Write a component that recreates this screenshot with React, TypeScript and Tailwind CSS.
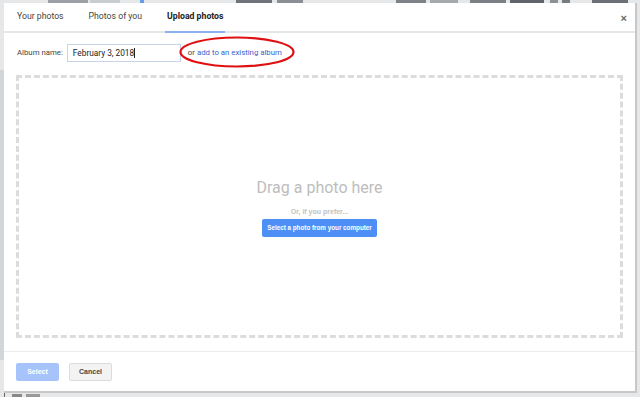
import React from "react";

const thumbs = [
  { x: 48, w: 40, c: "#9aa0a6" }, { x: 90, w: 30, c: "#c9ccd0" }, { x: 140, w: 4, c: "#6a9be8" },
  { x: 236, w: 36, c: "#6e747a" }, { x: 277, w: 26, c: "#8a8f96" }, { x: 396, w: 30, c: "#7d8288" },
  { x: 430, w: 28, c: "#a5a9ad" }, { x: 470, w: 36, c: "#7a8086" }, { x: 510, w: 34, c: "#5f656b" },
  { x: 550, w: 8, c: "#8c9197" }, { x: 562, w: 8, c: "#767b80" }, { x: 592, w: 36, c: "#6a7075" },
];

export default function App() {
  return (
    <div className="relative w-[640px] h-[397px] overflow-hidden bg-[#e6e7e8]" style={{ fontFamily: "Roboto, 'Liberation Sans', sans-serif" }}>
      {/* background photo strip */}
      {thumbs.map((t, i) => (
        <div key={i} className="absolute top-0 h-[3px]" style={{ left: t.x, width: t.w, background: t.c }} />
      ))}
      <div className="absolute left-0 top-[70px] w-[4px] h-[290px] bg-[#d3d6d9]" />
      <div className="absolute left-[4px] top-[393px] w-[1px] h-[4px] bg-[#666]" />
      <div className="absolute left-[12px] top-[394px] w-[10px] h-[3px] bg-[#888]" />
      <div className="absolute left-[26px] top-[394px] w-[14px] h-[3px] bg-[#999]" />

      {/* dialog */}
      <div className="absolute left-[4px] top-[3px] w-[633px] h-[390px] bg-white border-r-2 border-b-2 border-[#c8c8c8] flex flex-col">
        {/* tabs */}
        <div className="relative h-[30px] flex items-stretch pl-[13px] border-b-2 border-[#e6e6e6] shrink-0">
          <div className="flex items-center text-[8.7px] text-[#444] pr-[25px]">Your photos</div>
          <div className="flex items-center text-[8.7px] text-[#444] pr-[25px]">Photos of you</div>
          <div className="relative flex items-center text-[8.7px] text-[#222] font-bold px-[2px] -ml-[2px]">
            Upload photos
            <div className="absolute left-0 right-0 -bottom-[2px] h-[2px] bg-[#8ab0f0]" />
          </div>
          <div className="ml-auto mr-[8px] flex items-center pt-[3px] text-[#666] text-[11px] font-bold" style={{ fontFamily: "'Liberation Sans', sans-serif" }}>×</div>
        </div>

        {/* album row */}
        <div className="relative flex items-center h-[18px] mt-[11px] pl-[13px] shrink-0">
          <span className="text-[7.8px] text-[#444] mr-[4px]">Album name:</span>
          <div className="w-[114px] h-[18px] border border-[#c7d4ea] flex items-center pl-[5px] text-[8.3px] text-[#222]">
            February 3, 2018<span className="w-px h-[10px] bg-[#222]" />
          </div>
          <span className="ml-[7px] text-[7.8px] text-[#444]">or</span>
          <span className="ml-[2px] text-[7.8px] text-[#3b5fc9]">add to an existing album</span>
          <svg className="absolute left-[174px] -top-[8px]" width="118" height="32" viewBox="0 0 118 32">
            <ellipse cx="59" cy="16" rx="56.5" ry="14.5" fill="none" stroke="#e01010" strokeWidth="2.2" />
          </svg>
        </div>

        {/* drop zone */}
        <div className="mx-[12px] mt-[13px] h-[263px] border-[3px] border-dashed border-[#dcdcdc] flex flex-col items-center pt-[102px] shrink-0">
          <div className="text-[16px] text-[#bdbdbd] leading-none">Drag a photo here</div>
          <div className="mt-[12px] text-[7px] font-bold text-[#c2c2c2] leading-none whitespace-nowrap" style={{ fontFamily: "'Liberation Sans', sans-serif" }}>Or, if you prefer...</div>
          <div className="mt-[4px] w-[115px] h-[18px] bg-[#4d8ff6] rounded-[2px] flex items-center justify-center text-white text-[6.3px] font-bold whitespace-nowrap" style={{ fontFamily: "'Liberation Sans', sans-serif" }}>
            Select a photo from your computer
          </div>
        </div>

        {/* footer */}
        <div className="mt-[13px] border-t border-[#ececec] flex items-center gap-[10px] pl-[12px] pt-[11px] text-[7px] font-bold" style={{ fontFamily: "'Liberation Sans', sans-serif" }}>
          <div className="w-[43px] h-[18px] rounded-[2px] bg-[#a6c4fb] text-white flex items-center justify-center">Select</div>
          <div className="w-[43px] h-[18px] rounded-[2px] bg-[#f3f3f3] border border-[#dcdcdc] text-[#444] flex items-center justify-center">Cancel</div>
        </div>
      </div>
    </div>
  );
}
